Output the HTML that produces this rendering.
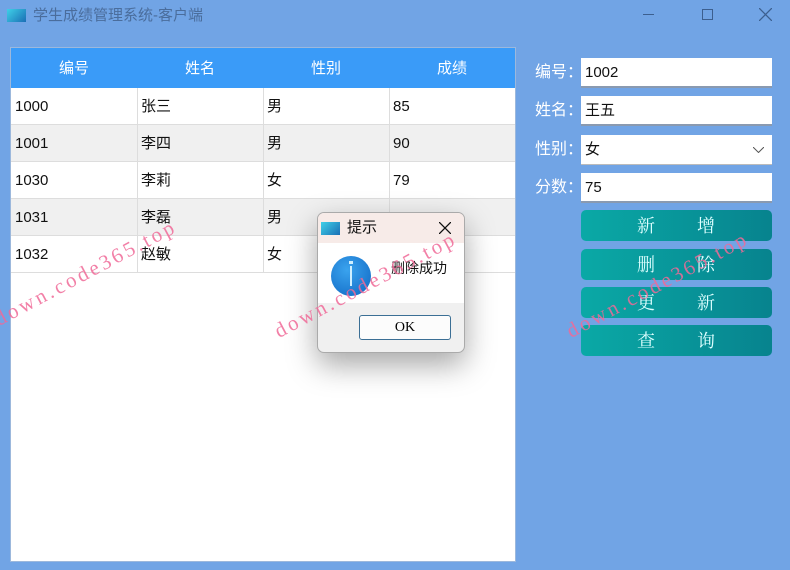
<!DOCTYPE html>
<html><head><meta charset="utf-8"><style>
*{margin:0;padding:0;box-sizing:border-box}
body{width:790px;height:570px;background:#71a4e5;position:relative;overflow:hidden;font-family:"Liberation Sans","Noto Sans CJK SC",sans-serif}
.abs{position:absolute}
span,b,div{line-height:18px}
.title{left:33px;top:7px;font-size:15px;color:#4a6d9c}
.tbl{left:10px;top:47px;width:506px;height:515px;background:#fff;border:1px solid #9cb8dc}
.hd{position:absolute;left:0;top:0;width:100%;height:40px;background:#3a9bf8;color:#fff;font-size:15px}
.hd span{position:absolute;top:12px;width:126px;text-align:center}
.row{position:absolute;left:0;width:100%;height:37px;border-bottom:1px solid #ddd;font-size:15px;color:#111}
.row span{position:absolute;top:10px}
.vl{position:absolute;top:40px;height:185px;width:1px;background:#ddd}
.lab{left:535px;font-size:16px;color:#fff}
.inp{left:581px;width:191px;height:30px;background:#fff;border-bottom:2px solid #8a9ab0;font-size:15px;padding:6px 4px;color:#111}
.btn{left:581px;width:191px;height:31px;border-radius:5px;background:linear-gradient(90deg,#0aa9a6,#07838e);color:#dff;font-size:18px;font-family:"Liberation Serif","Noto Serif CJK SC",serif}
.btn b{position:absolute;top:6px;font-weight:normal;line-height:20px}
.wm{color:#f06a98;font-family:"Liberation Serif",serif;font-size:21px;transform:rotate(-28deg);transform-origin:left bottom;white-space:nowrap;opacity:.85;letter-spacing:3px}
</style></head><body>
<div class="abs" style="left:7px;top:9px;width:19px;height:13px;background:linear-gradient(135deg,#3fd0e8,#1a6fb5)"></div>
<div class="abs title">学生成绩管理系统-客户端</div>
<div class="abs" style="left:643px;top:14px;width:11px;height:1px;background:#3c5f8f"></div>
<div class="abs" style="left:702px;top:9px;width:11px;height:11px;border:1px solid #3c5f8f"></div>
<svg class="abs" style="left:759px;top:8px" width="13" height="13"><path d="M0 0L13 13M13 0L0 13" stroke="#3c5f8f" stroke-width="1.3"/></svg>

<div class="abs tbl">
<div class="hd"><span style="left:0">编号</span><span style="left:126px">姓名</span><span style="left:252px">性别</span><span style="left:378px">成绩</span></div>
<div class="row" style="top:40px;background:#fff"><span style="left:4px">1000</span><span style="left:130px">张三</span><span style="left:256px">男</span><span style="left:382px">85</span></div>
<div class="row" style="top:77px;background:#f0f0f0"><span style="left:4px">1001</span><span style="left:130px">李四</span><span style="left:256px">男</span><span style="left:382px">90</span></div>
<div class="row" style="top:114px;background:#fff"><span style="left:4px">1030</span><span style="left:130px">李莉</span><span style="left:256px">女</span><span style="left:382px">79</span></div>
<div class="row" style="top:151px;background:#f0f0f0"><span style="left:4px">1031</span><span style="left:130px">李磊</span><span style="left:256px">男</span><span style="left:382px">78</span></div>
<div class="row" style="top:188px;background:#fff"><span style="left:4px">1032</span><span style="left:130px">赵敏</span><span style="left:256px">女</span><span style="left:382px">88</span></div>
<div class="vl" style="left:126px"></div><div class="vl" style="left:252px"></div><div class="vl" style="left:378px"></div>
</div>

<div class="abs lab" style="top:64px">编号：</div>
<div class="abs lab" style="top:102px">姓名：</div>
<div class="abs lab" style="top:141px">性别：</div>
<div class="abs lab" style="top:179px">分数：</div>
<div class="abs inp" style="top:58px">1002</div>
<div class="abs inp" style="top:96px">王五</div>
<div class="abs inp" style="top:135px;border-bottom:1px solid #bbb">女<svg style="position:absolute;right:8px;top:12px" width="11" height="6"><path d="M0 0L5.5 5.5L11 0" fill="none" stroke="#555"/></svg></div>
<div class="abs inp" style="top:173px">75</div>
<div class="abs btn" style="top:210px"><b style="left:56px">新</b><b style="left:116px">增</b></div>
<div class="abs btn" style="top:249px"><b style="left:56px">删</b><b style="left:116px">除</b></div>
<div class="abs btn" style="top:287px"><b style="left:56px">更</b><b style="left:116px">新</b></div>
<div class="abs btn" style="top:325px"><b style="left:56px">查</b><b style="left:116px">询</b></div>

<div class="abs" style="left:317px;top:212px;width:148px;height:141px;border:1px solid #aaa;border-radius:7px;background:#f0f0f0;overflow:hidden;box-shadow:0 12px 30px rgba(0,0,0,.35)">
<div class="abs" style="left:0;top:0;width:148px;height:30px;background:#f7ebe8"></div>
<div class="abs" style="left:3px;top:9px;width:19px;height:13px;background:linear-gradient(135deg,#3fd0e8,#1a6fb5)"></div>
<div class="abs" style="left:29px;top:6px;font-size:15px;color:#111">提示</div>
<svg class="abs" style="left:121px;top:9px" width="12" height="12"><path d="M0 0L12 12M12 0L0 12" stroke="#111" stroke-width="1.3"/></svg>
<div class="abs" style="left:0;top:30px;width:148px;height:60px;background:#fff"></div>
<div class="abs" style="left:13px;top:43px;width:40px;height:40px;border-radius:50%;background:radial-gradient(circle at 40% 35%,#3aa3ee,#0f66c2)"></div>
<div class="abs" style="left:32px;top:53px;width:2px;height:20px;background:#cfefff"></div>
<div class="abs" style="left:31px;top:48px;width:4px;height:3px;background:#cfefff"></div>
<div class="abs" style="left:73px;top:46px;font-size:14px;color:#111">删除成功</div>
<div class="abs" style="left:41px;top:102px;width:92px;height:25px;border:1px solid #3b6f95;border-radius:3px;background:#fcfcfc;text-align:center;line-height:23px;font-family:'Liberation Serif',serif;font-size:14px">OK</div>
</div>

<div class="abs wm" style="left:0px;top:310px">down.code365.top</div>
<div class="abs wm" style="left:280px;top:322px">down.code365.top</div>
<div class="abs wm" style="left:572px;top:322px">down.code365.top</div>
</body></html>
